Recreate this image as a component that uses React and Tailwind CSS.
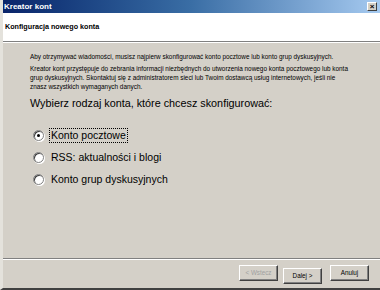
import { useState } from 'react';

const font = { fontFamily: '"Liberation Sans", Arial, sans-serif' };

function Radio({ checked }) {
  return (
    <span className="relative w-[11px] h-[11px] rounded-full shrink-0 bg-white border border-[#808080] shadow-[inset_1px_1px_0_#404040,1px_1px_0_#ffffff]">
      {checked && <span className="absolute left-[3px] top-[3px] w-[3px] h-[3px] rounded-full bg-black" />}
    </span>
  );
}

function WizButton({ children, disabled }) {
  return (
    <button
      disabled={disabled}
      className={
        'w-[39px] h-[16px] text-[6.3px] bg-[#d4d0c8] border border-t-white border-l-white border-r-[#404040] border-b-[#404040] shadow-[inset_-1px_-1px_0_#808080] ' +
        (disabled ? 'text-[#a0a0a0]' : 'text-black')
      }
    >
      {children}
    </button>
  );
}

export default function App() {
  const [kind, setKind] = useState('mail');
  const options = [
    { id: 'mail', label: 'Konto pocztowe' },
    { id: 'rss', label: 'RSS: aktualności i blogi' },
    { id: 'news', label: 'Konto grup dyskusyjnych' },
  ];

  return (
    <div className="w-[380px] h-[290px] bg-[#d4d0c8] flex flex-col border-l-[3px] border-l-[#e4e2dc] border-b-[2px] border-b-[#404040] overflow-hidden" style={font}>
      {/* title bar */}
      <div className="h-[13px] flex items-center justify-between pl-[1px] pr-[3px] bg-gradient-to-r from-[#0a246a] via-[#3a6ea5] to-[#a6caf0]">
        <span className="text-white font-bold text-[8px] leading-none">Kreator kont</span>
        <span className="w-[10px] h-[9px] bg-[#d4d0c8] border border-t-white border-l-white border-r-[#404040] border-b-[#404040] flex items-center justify-center text-[8px] leading-none font-bold text-black">×</span>
      </div>

      {/* header */}
      <div className="h-[29px] bg-white flex items-center pl-[2px] border-b border-b-[#808080]">
        <span className="text-[7.2px] font-bold text-black">Konfiguracja nowego konta</span>
      </div>
      <div className="h-px bg-white" />

      {/* body */}
      <div className="flex-1 pl-[27px] pr-[22px] pt-[9px] text-black">
        <p className="text-[6.4px] leading-[9px]">
          Aby otrzymywać wiadomości, musisz najpierw skonfigurować konto pocztowe lub konto grup dyskusyjnych.
        </p>
        <p className="text-[6.4px] leading-[9px] mt-[3px]">
          Kreator kont przystępuje do zebrania informacji niezbędnych do utworzenia nowego konta pocztowego lub konta grup dyskusyjnych. Skontaktuj się z administratorem sieci lub Twoim dostawcą usług internetowych, jeśli nie{' '}
          <br />
          znasz wszystkich wymaganych danych.
        </p>
        <p className="text-[10.8px] leading-[14px] mt-[5px]">
          Wybierz rodzaj konta, które chcesz skonfigurować:
        </p>

        <div className="flex flex-col gap-[8px] mt-[18px] pl-[3px]">
          {options.map((o) => (
            <label key={o.id} className="flex items-center gap-[6px] h-[14px] cursor-default" onClick={() => setKind(o.id)}>
              <Radio checked={kind === o.id} />
              <span
                className={
                  'text-[10.5px] leading-[13px] px-[1px] ' +
                  (kind === o.id ? 'outline outline-1 outline-dotted outline-black' : '')
                }
              >
                {o.label}
              </span>
            </label>
          ))}
        </div>
      </div>

      {/* footer */}
      <div className="h-px bg-[#808080]" />
      <div className="h-px bg-white" />
      <div className="h-[28px] flex items-center justify-end gap-[5px] pr-[11px] pb-[2px]">
        <WizButton disabled>&lt; Wstecz</WizButton>
        <div className="mr-[3px]">
          <WizButton>Dalej &gt;</WizButton>
        </div>
        <WizButton>Anuluj</WizButton>
      </div>
    </div>
  );
}
